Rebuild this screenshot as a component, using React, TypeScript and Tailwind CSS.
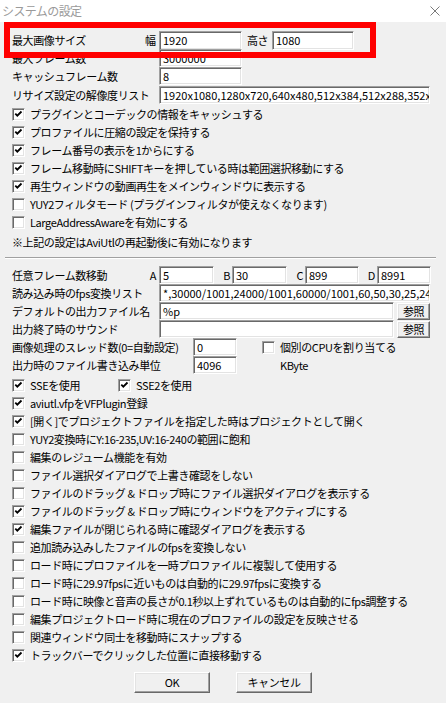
import React from 'react';

// sunken edit box / checkbox edge, classic Windows look
const SUNKEN =
  'border border-t-[#a0a0a0] border-l-[#a0a0a0] border-r-white border-b-white shadow-[inset_1px_1px_0_#696969,inset_-1px_-1px_0_#e3e3e3] bg-white';
const RAISED =
  'border border-t-white border-l-white border-r-[#696969] border-b-[#696969] shadow-[inset_-1px_-1px_0_#a0a0a0,inset_1px_1px_0_#e3e3e3] bg-[#f0f0f0]';

function Field({ w, value, h = 'h-[18px]' }: { w: string; value?: string; h?: string }) {
  return (
    <div className={`${w} ${h} ${SUNKEN} shrink-0 pl-[3px] overflow-hidden whitespace-nowrap flex items-center text-[11px] tracking-normal`}>
      {value}
    </div>
  );
}

function Box({ on }: { on?: boolean }) {
  return (
    <span className={`relative block w-[13px] h-[13px] shrink-0 ${SUNKEN}`}>
      {on && (
        <svg className="absolute left-0 top-0" width="11" height="11" viewBox="0 0 11 11">
          <path d="M2.3 4.7 L4.3 6.7 L8.5 2.5" stroke="#000" strokeWidth="1.8" fill="none" />
        </svg>
      )}
    </span>
  );
}

function Check({ on, label }: { on?: boolean; label: string }) {
  return (
    <div className="flex items-center h-[18px]">
      <Box on={on} />
      <span className="ml-[5px] whitespace-nowrap">{label}</span>
    </div>
  );
}

function Row({ children, className = '' }: { children: React.ReactNode; className?: string }) {
  return <div className={`flex items-center h-[18px] whitespace-nowrap ${className}`}>{children}</div>;
}

const topChecks: [boolean, string][] = [
  [true, 'プラグインとコーデックの情報をキャッシュする'],
  [true, 'プロファイルに圧縮の設定を保持する'],
  [true, 'フレーム番号の表示を1からにする'],
  [true, 'フレーム移動時にSHIFTキーを押している時は範囲選択移動にする'],
  [true, '再生ウィンドウの動画再生をメインウィンドウに表示する'],
  [false, 'YUY2フィルタモード (プラグインフィルタが使えなくなります)'],
  [false, 'LargeAddressAwareを有効にする'],
];

const bottomChecks: [boolean, string][] = [
  [true, 'aviutl.vfpをVFPlugin登録'],
  [true, '[開く]でプロジェクトファイルを指定した時はプロジェクトとして開く'],
  [false, 'YUY2変換時にY:16-235,UV:16-240の範囲に飽和'],
  [false, '編集のレジューム機能を有効'],
  [false, 'ファイル選択ダイアログで上書き確認をしない'],
  [false, 'ファイルのドラッグ & ドロップ時にファイル選択ダイアログを表示する'],
  [true, 'ファイルのドラッグ & ドロップ時にウィンドウをアクティブにする'],
  [true, '編集ファイルが閉じられる時に確認ダイアログを表示する'],
  [false, '追加読み込みしたファイルのfpsを変換しない'],
  [false, 'ロード時にプロファイルを一時プロファイルに複製して使用する'],
  [false, 'ロード時に29.97fpsに近いものは自動的に29.97fpsに変換する'],
  [false, 'ロード時に映像と音声の長さが0.1秒以上ずれているものは自動的にfps調整する'],
  [false, '編集プロジェクトロード時に現在のプロファイルの設定を反映させる'],
  [false, '関連ウィンドウ同士を移動時にスナップする'],
  [true, 'トラックバーでクリックした位置に直接移動する'],
];

export default function App() {
  return (
    <div className="relative w-[446px] h-[703px] overflow-hidden bg-[#f0f0f0] text-black text-[11px] tracking-[-0.4px] leading-none font-['Noto_Sans_CJK_JP','Liberation_Sans',sans-serif]">
      {/* title bar */}
      <div className="h-[22px] bg-white flex items-center justify-between pl-[2px] pr-[6px]">
        <span className="text-[12px] text-[#9a9a9a] tracking-[-0.6px]">システムの設定</span>
        <svg width="10" height="10" viewBox="0 0 10 10">
          <path d="M0.5 0.5 L9.5 9.5 M9.5 0.5 L0.5 9.5" stroke="#7a7a7a" strokeWidth="1" />
        </svg>
      </div>

      {/* upper section */}
      <div className="pl-[12px] pt-[9px]">
        <Row className="h-[18px]">
          <span className="w-[133px]">最大画像サイズ</span>
          <span className="w-[14px]">幅</span>
          <Field w="w-[83px]" h="h-[19px]" value="1920" />
          <span className="ml-[5px] w-[25px]">高さ</span>
          <Field w="w-[82px]" h="h-[19px]" value="1080" />
        </Row>
        <Row>
          <span className="w-[147px]">最大フレーム数</span>
          <Field w="w-[83px]" value="3000000" />
        </Row>
        <Row>
          <span className="w-[147px]">キャッシュフレーム数</span>
          <Field w="w-[83px]" value="8" />
        </Row>
        <Row className="mt-px">
          <span className="w-[147px]">リサイズ設定の解像度リスト</span>
          <Field w="w-[271px]" value="1920x1080,1280x720,640x480,512x384,512x288,352x240,320x240" />
        </Row>
        <div className="mt-px">
          {topChecks.map(([on, label]) => (
            <Check key={label} on={on} label={label} />
          ))}
        </div>
        <Row className="mt-[2px]">※上記の設定はAviUtlの再起動後に有効になります</Row>
      </div>

      {/* separator */}
      <div className="ml-[5px] mt-[6px] w-[431px] h-[2px] border-t border-t-[#a0a0a0] border-b border-b-white" />

      {/* lower section */}
      <div className="pl-[12px] pt-[7px]">
        <Row>
          <span className="w-[135px]">任意フレーム数移動</span>
          <span className="w-[12px] text-right pr-[3px]">A</span>
          <Field w="w-[55px]" value="5" />
          <span className="w-[18px] text-right pr-[2px]">B</span>
          <Field w="w-[55px]" value="30" />
          <span className="w-[18px] text-right pr-[2px]">C</span>
          <Field w="w-[54px]" value="899" />
          <span className="w-[18px] text-right pr-[2px]">D</span>
          <Field w="w-[54px]" value="8991" />
        </Row>
        <Row>
          <span className="w-[147px]">読み込み時のfps変換リスト</span>
          <Field w="w-[271px]" value="*,30000/1001,24000/1001,60000/1001,60,50,30,25,24,20,15" />
        </Row>
        <Row>
          <span className="w-[147px]">デフォルトの出力ファイル名</span>
          <Field w="w-[235px]" value="%p" />
          <button className={`ml-[3px] w-[33px] h-[17px] ${RAISED} flex items-center justify-center`}>参照</button>
        </Row>
        <Row>
          <span className="w-[147px]">出力終了時のサウンド</span>
          <Field w="w-[235px]" />
          <button className={`ml-[3px] w-[33px] h-[17px] ${RAISED} flex items-center justify-center`}>参照</button>
        </Row>
        <Row>
          <span className="w-[181px]">画像処理のスレッド数(0=自動設定)</span>
          <Field w="w-[44px]" value="0" />
          <span className="ml-[25px]">
            <Box />
          </span>
          <span className="ml-[5px]">個別のCPUを割り当てる</span>
        </Row>
        <Row>
          <span className="w-[181px]">出力時のファイル書き込み単位</span>
          <Field w="w-[44px]" value="4096" />
          <span className="ml-[43px]">KByte</span>
        </Row>
        <Row className="mt-[2px]">
          <div className="w-[106px]">
            <Check on label="SSEを使用" />
          </div>
          <Check on label="SSE2を使用" />
        </Row>
        {bottomChecks.map(([on, label]) => (
          <Check key={label} on={on} label={label} />
        ))}
      </div>

      {/* buttons */}
      <div className="mt-[8px] flex justify-center gap-[26px]">
        <button className={`w-[76px] h-[21px] ${RAISED} flex items-center justify-center`}>OK</button>
        <button className={`w-[76px] h-[21px] ${RAISED} flex items-center justify-center`}>キャンセル</button>
      </div>

      {/* red highlight frame over the first row */}
      <div className="absolute left-[4px] top-[22px] w-[372px] h-[36px] border-[6px] border-[#ff0000]" />
    </div>
  );
}
